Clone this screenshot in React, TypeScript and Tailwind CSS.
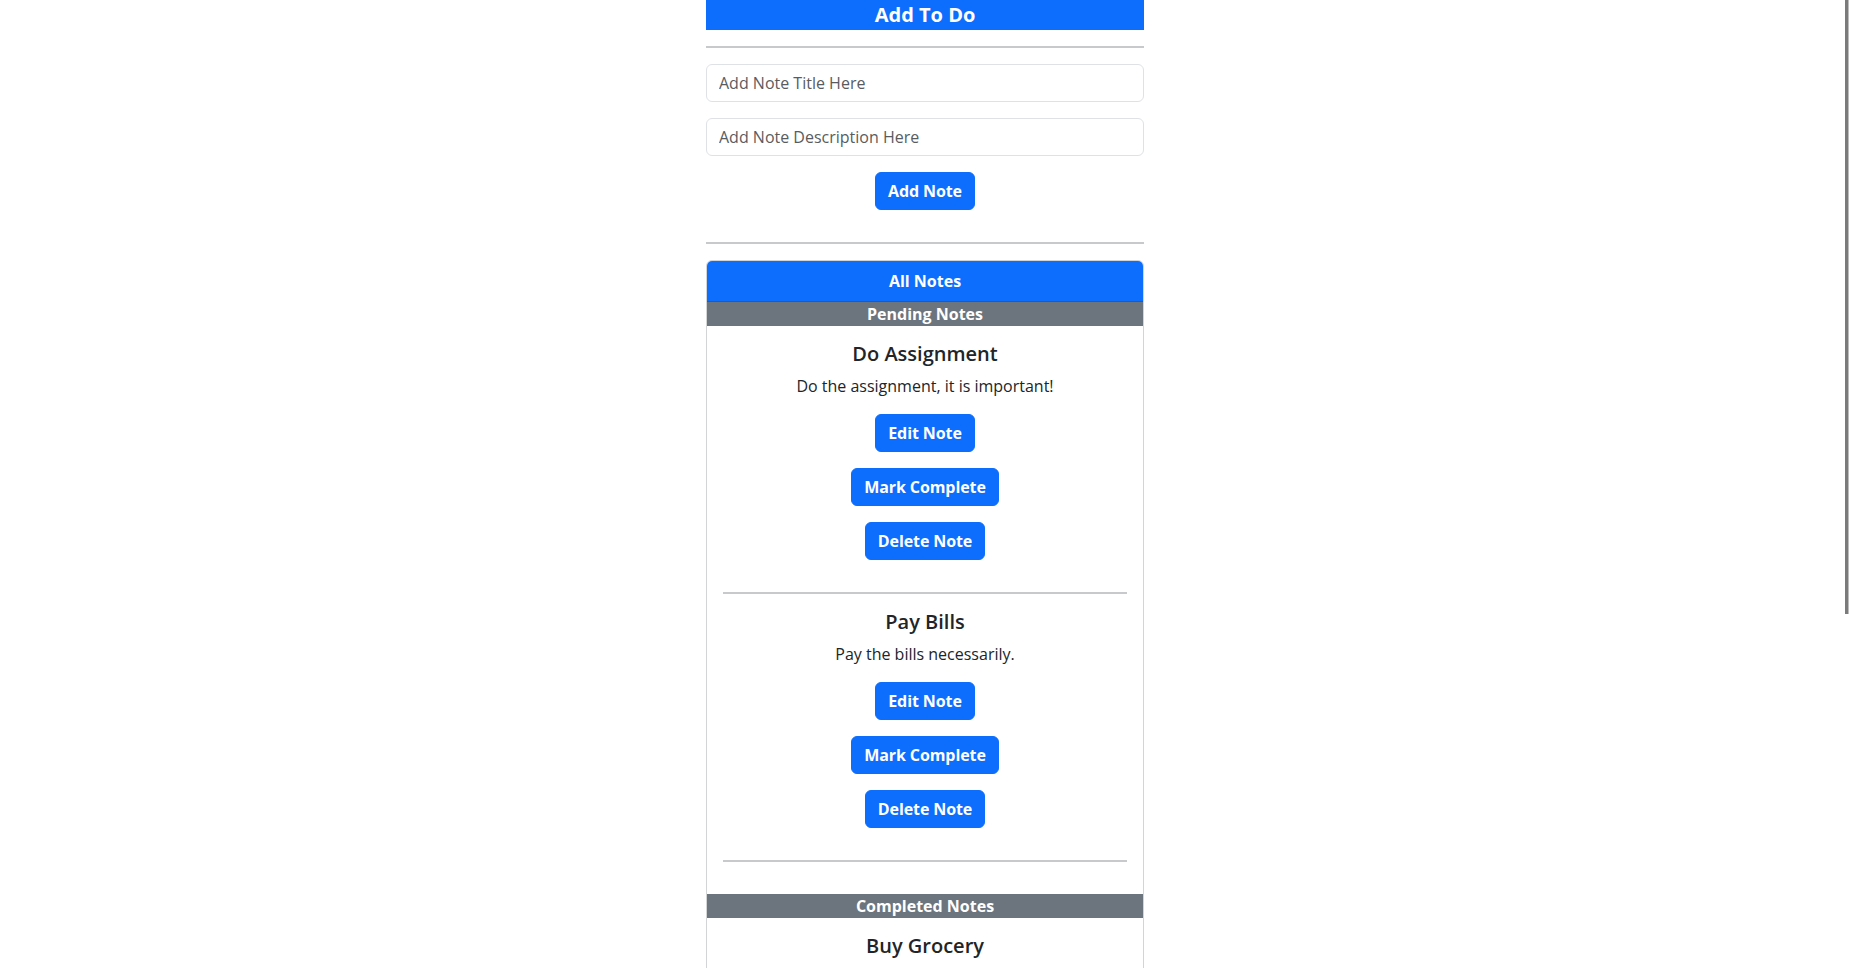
import React from "react";

type Note = { title: string; desc: string };

const pending: Note[] = [
  { title: "Do Assignment", desc: "Do the assignment, it is important!" },
  { title: "Pay Bills", desc: "Pay the bills necessarily." },
];

const font = { fontFamily: '"Open Sans", "Noto Sans", sans-serif' };

const Btn = ({ children }: { children: React.ReactNode }) => (
  <button className="mb-4 rounded-[6px] border border-[#0d6efd] bg-[#0d6efd] px-3 py-[6px] text-base leading-6 font-bold tracking-[-0.1px] text-white">
    {children}
  </button>
);

const Hr = ({ className = "" }: { className?: string }) => (
  <div className={`h-0 border-t-2 border-[#c8c9ca] ${className}`}></div>
);

const NoteItem = ({ note }: { note: Note }) => (
  <div className="flex flex-col items-center">
    <h5 className="mb-2 text-xl leading-6 font-semibold text-[#212529]">{note.title}</h5>
    <p className="mb-4 text-base leading-6 text-[#212529]">{note.desc}</p>
    <Btn>Edit Note</Btn>
    <Btn>Mark Complete</Btn>
    <Btn>Delete Note</Btn>
    <Hr className="my-4 w-full" />
  </div>
);

export default function App() {
  return (
    <div className="relative h-[968px] overflow-hidden bg-white text-[#212529]" style={font}>
      <div className="mx-auto w-[438px]">
        <h4 className="bg-[#0d6efd] text-center text-xl leading-[30px] font-bold text-white">Add To Do</h4>
        <Hr className="my-4" />
        <div className="flex flex-col items-center">
          <input
            className="mb-4 w-full rounded-[6px] border border-[#dee2e6] px-3 py-[6px] text-base leading-6 outline-none placeholder:text-[#595c5f]"
            placeholder="Add Note Title Here"
          />
          <input
            className="mb-4 w-full rounded-[6px] border border-[#dee2e6] px-3 py-[6px] text-base leading-6 outline-none placeholder:text-[#595c5f]"
            placeholder="Add Note Description Here"
          />
          <Btn>Add Note</Btn>
        </div>
        <Hr className="my-4" />

        <div className="mb-4 overflow-hidden rounded-[6px] border border-[#d3d4d5]">
          <div className="border-b border-[#0b5ed7] bg-[#0d6efd] px-4 py-2 text-center text-base leading-6 font-bold text-white">
            All Notes
          </div>
          <div className="bg-[#6c757d] text-center text-base leading-6 font-bold text-white">Pending Notes</div>
          <div className="p-4">
            {pending.map((n) => (
              <NoteItem key={n.title} note={n} />
            ))}
          </div>
          <div className="bg-[#6c757d] text-center text-base leading-6 font-bold text-white">Completed Notes</div>
          <div className="flex h-[60px] flex-col items-center p-4">
            <h5 className="text-xl leading-6 font-semibold text-[#212529]">Buy Grocery</h5>
          </div>
        </div>
      </div>

      {/* overlay scrollbar thumb */}
      <div className="absolute top-0 right-[2px] h-[614px] w-[3px] bg-[#7b7b7b] shadow-[1px_0_0_#bdbdbd]"></div>
    </div>
  );
}
